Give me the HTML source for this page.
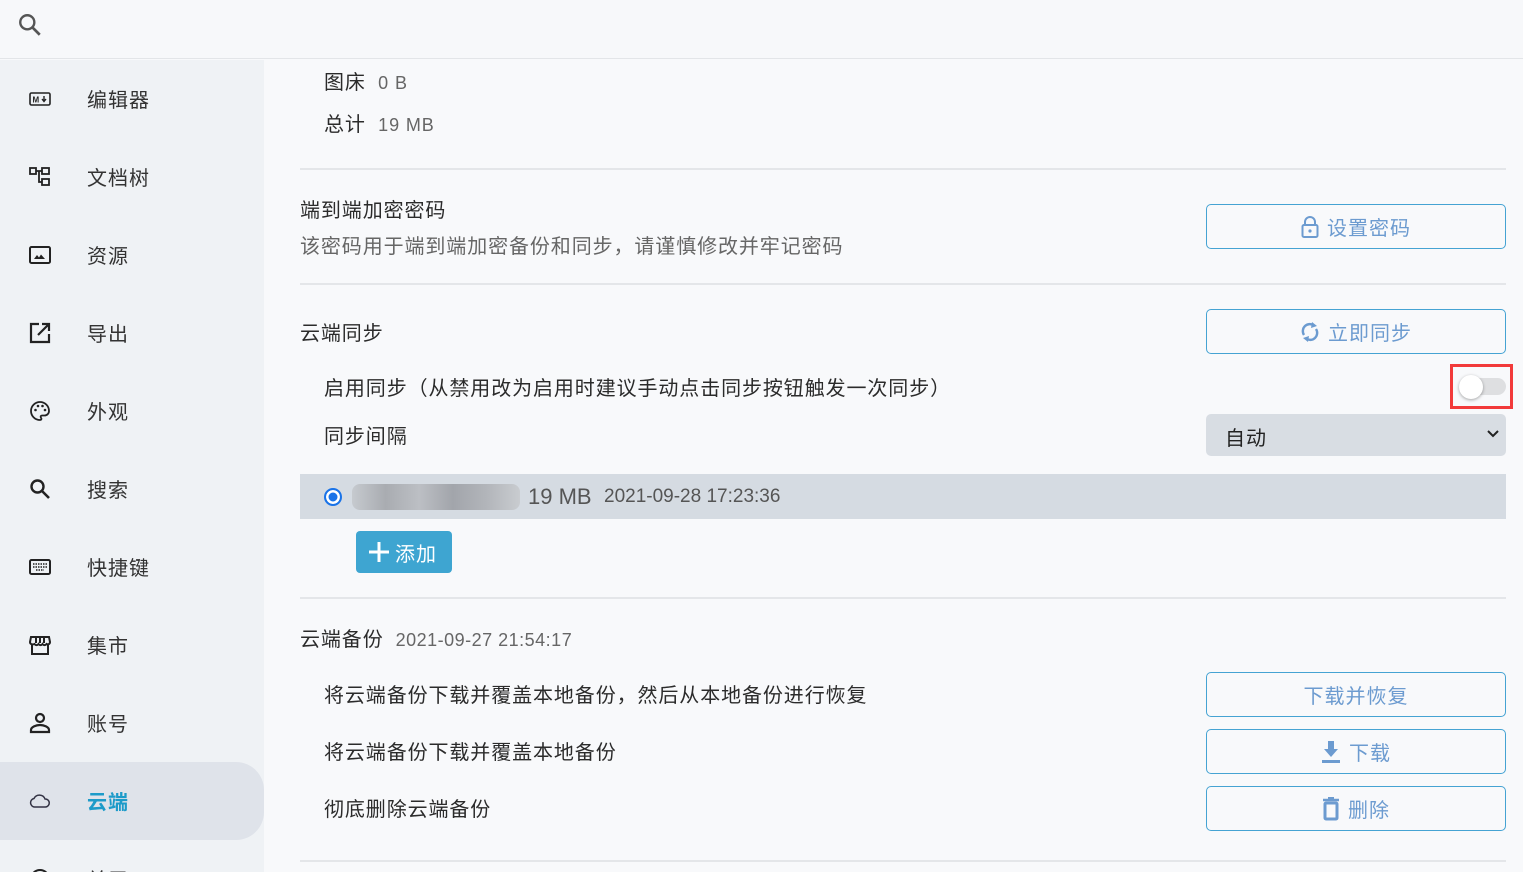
<!DOCTYPE html>
<html><head><meta charset="utf-8"><style>
*{margin:0;padding:0;box-sizing:border-box}
html{overflow:hidden;height:872px}
body{width:1523px;height:872px;overflow:hidden;background:#f8f9fb;font-family:"Liberation Sans","Noto Sans CJK SC",sans-serif;color:#2b2b2b;position:relative}
.top{position:absolute;left:0;top:0;width:1523px;height:59px;background:#f7f8fa;border-bottom:1px solid #e3e5e8}
.side{position:absolute;left:0;top:60px;width:264px;height:812px;background:#eff2f5;overflow:hidden}
.it{position:absolute;left:0;width:264px;height:78px;display:flex;align-items:center}
.it svg{position:absolute;left:29px}
.it span{position:absolute;left:87px;top:24px;font-size:20px;color:#333;letter-spacing:1px}
.act{background:#dfe3ea;border-radius:0 28px 28px 0}
.a{position:absolute;white-space:nowrap}
.l{font-size:20px;color:#2b2b2b;letter-spacing:0.9px}
.g{color:#666}
.hr{position:absolute;left:300px;width:1206px;height:2px;background:#e4e6e9}
.btn{position:absolute;left:1206px;width:300px;height:45px;border:1.5px solid #45a3d3;border-radius:5px;display:flex;align-items:center;justify-content:center;color:#6c9bd0;font-size:20px;gap:8px;letter-spacing:1px}
</style></head><body>
<div class="top"><svg style="position:absolute;left:17px;top:12px" width="26" height="26" viewBox="0 0 24 24"><circle cx="9.5" cy="9.5" r="6.5" fill="none" stroke="#555" stroke-width="2.2"/><path d="M14.5 14.5L21 21" stroke="#555" stroke-width="2.5"/></svg></div>
<div class="side">
<div class="it" style="top:0"><svg width="22" height="14" viewBox="0 0 22 14"><rect x="1" y="1" width="20" height="12" rx="1.5" fill="none" stroke="#222" stroke-width="1.6"/><text x="3.5" y="10.5" font-size="8" font-weight="bold" fill="#222" font-family="Liberation Sans">M</text><path d="M15 4v5M13 7l2 2.5 2-2.5" stroke="#222" stroke-width="1.4" fill="none"/></svg><span>编辑器</span></div>
<div class="it" style="top:78px"><svg width="22" height="22" viewBox="0 0 22 22"><rect x="1" y="2" width="6" height="6" fill="none" stroke="#222" stroke-width="1.8"/><rect x="13" y="2" width="7" height="6" fill="none" stroke="#222" stroke-width="1.8"/><rect x="13" y="13" width="7" height="6" fill="none" stroke="#222" stroke-width="1.8"/><path d="M7 5h6M10 5v11h3" stroke="#222" stroke-width="1.8" fill="none"/></svg><span>文档树</span></div>
<div class="it" style="top:156px"><svg width="22" height="18" viewBox="0 0 22 18"><rect x="1" y="1" width="20" height="16" rx="1.5" fill="none" stroke="#222" stroke-width="2"/><path d="M5 13l3-4 2 2.5 2-3 4 4.5z" fill="#222"/></svg><span>资源</span></div>
<div class="it" style="top:234px"><svg width="22" height="22" viewBox="0 0 22 22"><path d="M10 2H2v18h18v-8" fill="none" stroke="#222" stroke-width="2.2"/><path d="M13 2h7v7M20 2L9 13" fill="none" stroke="#222" stroke-width="2.2"/></svg><span>导出</span></div>
<div class="it" style="top:312px"><svg width="22" height="22" viewBox="0 0 22 22"><path d="M11 2a9 9 0 1 0 0 18c1.5 0 1.8-1.3 1-2.2-.8-1-.3-2.3 1-2.3h2.5A4.5 4.5 0 0 0 20 11c0-5-4-9-9-9z" fill="none" stroke="#222" stroke-width="1.8"/><circle cx="6.5" cy="10" r="1.3" fill="#222"/><circle cx="9" cy="6" r="1.3" fill="#222"/><circle cx="13.5" cy="6" r="1.3" fill="#222"/><circle cx="16" cy="10" r="1.3" fill="#222"/></svg><span>外观</span></div>
<div class="it" style="top:390px"><svg width="22" height="22" viewBox="0 0 22 22"><circle cx="8.5" cy="8.5" r="6" fill="none" stroke="#222" stroke-width="2.4"/><path d="M13 13l7 7" stroke="#222" stroke-width="2.6"/></svg><span>搜索</span></div>
<div class="it" style="top:468px"><svg width="22" height="16" viewBox="0 0 22 16"><rect x="1" y="1" width="20" height="14" rx="1.5" fill="none" stroke="#222" stroke-width="2"/><path d="M4 5h14M4 8h14M7 11h8" stroke="#222" stroke-width="1.5" stroke-dasharray="1.5 1"/></svg><span>快捷键</span></div>
<div class="it" style="top:546px"><svg width="22" height="20" viewBox="0 0 22 20"><path d="M2 2h18l1 5c0 2-2 3-3.5 2-1 1.5-3 1.5-4 0-1 1.5-3 1.5-4 0-1 1.5-3 1.5-4 0C3 10 1 9 1 7z" fill="none" stroke="#222" stroke-width="2"/><path d="M3 10v9h16v-9M7 2v6M11 2v6M15 2v6" fill="none" stroke="#222" stroke-width="2"/></svg><span>集市</span></div>
<div class="it" style="top:624px"><svg width="22" height="22" viewBox="0 0 22 22"><circle cx="11" cy="6" r="4" fill="none" stroke="#222" stroke-width="2.2"/><path d="M2 20v-2c0-3 5-5 9-5s9 2 9 5v2z" fill="none" stroke="#222" stroke-width="2.2"/></svg><span>账号</span></div>
<div class="it act" style="top:702px"><svg width="22" height="14" viewBox="0 0 22 14"><path d="M5.5 13A4.3 4.3 0 0 1 5 4.5 6 6 0 0 1 16 5a4 4 0 0 1 .5 8z" fill="none" stroke="#334" stroke-width="1.5"/></svg><span style="color:#1d9bc9;font-weight:bold">云端</span></div>
<div class="it" style="top:780px"><svg width="22" height="22" viewBox="0 0 22 22"><circle cx="11" cy="11" r="9" fill="none" stroke="#222" stroke-width="2"/></svg><span>关于</span></div>
</div>

<div class="a l" style="left:324px;top:66px">图床 <span class="g" style="font-size:18px">&nbsp;0 B</span></div>
<div class="a l" style="left:324px;top:108px">总计 <span class="g" style="font-size:18px">&nbsp;19 MB</span></div>
<div class="hr" style="top:168px"></div>
<div class="a l" style="left:300px;top:194px">端到端加密密码</div>
<div class="a l g" style="left:300px;top:230px">该密码用于端到端加密备份和同步，请谨慎修改并牢记密码</div>
<div class="btn" style="top:204px"><svg width="18" height="22" viewBox="0 0 18 22"><path d="M4 9V6a5 5 0 0 1 10 0v3" fill="none" stroke="#6c9bd0" stroke-width="2"/><rect x="1.5" y="9" width="15" height="12" rx="1.5" fill="none" stroke="#6c9bd0" stroke-width="2"/><circle cx="9" cy="15" r="1.6" fill="#6c9bd0"/></svg>设置密码</div>
<div class="hr" style="top:283px"></div>
<div class="a l" style="left:300px;top:317px">云端同步</div>
<div class="btn" style="top:309px"><svg width="20" height="22" viewBox="0 0 20 22"><path d="M4 14A7 7 0 0 1 14 4.5M16 8a7 7 0 0 1-10 9.5" fill="none" stroke="#6c9bd0" stroke-width="2.4"/><path d="M12 1l5 4-6 2zM8 21l-5-4 6-2z" fill="#6c9bd0"/></svg>立即同步</div>
<div class="a l" style="left:324px;top:372px">启用同步（从禁用改为启用时建议手动点击同步按钮触发一次同步）</div>
<div class="a" style="left:1450px;top:364px;width:63px;height:45px;border:3px solid #f23a3a"></div>
<div class="a" style="left:1461px;top:378px;width:45px;height:17px;border-radius:9px;background:#dedfe1"></div>
<div class="a" style="left:1459px;top:375px;width:24px;height:24px;border-radius:50%;background:#fff;box-shadow:0 1px 3px rgba(0,0,0,.35)"></div>
<div class="a l" style="left:324px;top:420px">同步间隔</div>
<div class="a" style="left:1206px;top:414px;width:300px;height:42px;background:#d8dde3;border-radius:5px"><span style="position:absolute;left:19px;top:8px;font-size:20px;color:#222;letter-spacing:1px">自动</span><svg style="position:absolute;right:6px;top:14px" width="14" height="12" viewBox="0 0 14 12"><path d="M2 3l5 5 5-5" fill="none" stroke="#222" stroke-width="2"/></svg></div>
<div class="a" style="left:300px;top:474px;width:1206px;height:45px;background:#d5dbe2"></div>
<div class="a" style="left:324px;top:488px;width:18px;height:18px;border-radius:50%;background:#1a73e8;border:2px solid #1a73e8;box-shadow:inset 0 0 0 2.5px #fff"></div>
<div class="a" style="left:352px;top:484px;width:168px;height:26px;border-radius:8px;background:linear-gradient(90deg,#c6cacf,#a9acb1 20%,#bcbfc4 40%,#a2a5ab 60%,#b2b5ba 80%,#c9ccd0)"></div>
<div class="a" style="left:528px;top:484px;font-size:22px;color:#555">19 MB</div>
<div class="a" style="left:604px;top:486px;font-size:19px;color:#555">2021-09-28 17:23:36</div>
<div class="a" style="left:356px;top:531px;width:96px;height:42px;background:#3ea5d1;border-radius:4px;color:#fff;font-size:20px;display:flex;align-items:center;padding-left:11px;gap:4px;letter-spacing:1px"><svg width="24" height="24" viewBox="0 0 24 24"><path d="M12 2v20M2 12h20" stroke="#fff" stroke-width="3"/></svg>添加</div>
<div class="hr" style="top:597px"></div>
<div class="a l" style="left:300px;top:623px">云端备份 <span class="g" style="font-size:18px;letter-spacing:0.5px">&nbsp;2021-09-27 21:54:17</span></div>
<div class="a l" style="left:324px;top:679px">将云端备份下载并覆盖本地备份，然后从本地备份进行恢复</div>
<div class="btn" style="top:672px">下载并恢复</div>
<div class="a l" style="left:324px;top:736px">将云端备份下载并覆盖本地备份</div>
<div class="btn" style="top:729px"><svg width="20" height="24" viewBox="0 0 20 24"><path d="M7 1h6v8h4l-7 8-7-8h4z" fill="#6c9bd0"/><rect x="1" y="20" width="18" height="3" fill="#6c9bd0"/></svg>下载</div>
<div class="a l" style="left:324px;top:793px">彻底删除云端备份</div>
<div class="btn" style="top:786px"><svg width="18" height="24" viewBox="0 0 18 24"><path d="M1 3h16M6 1h6" stroke="#6c9bd0" stroke-width="2.4"/><rect x="3" y="6" width="12" height="16" rx="1" fill="none" stroke="#6c9bd0" stroke-width="3"/></svg>删除</div>
<div class="hr" style="top:860px"></div>
</body></html>
